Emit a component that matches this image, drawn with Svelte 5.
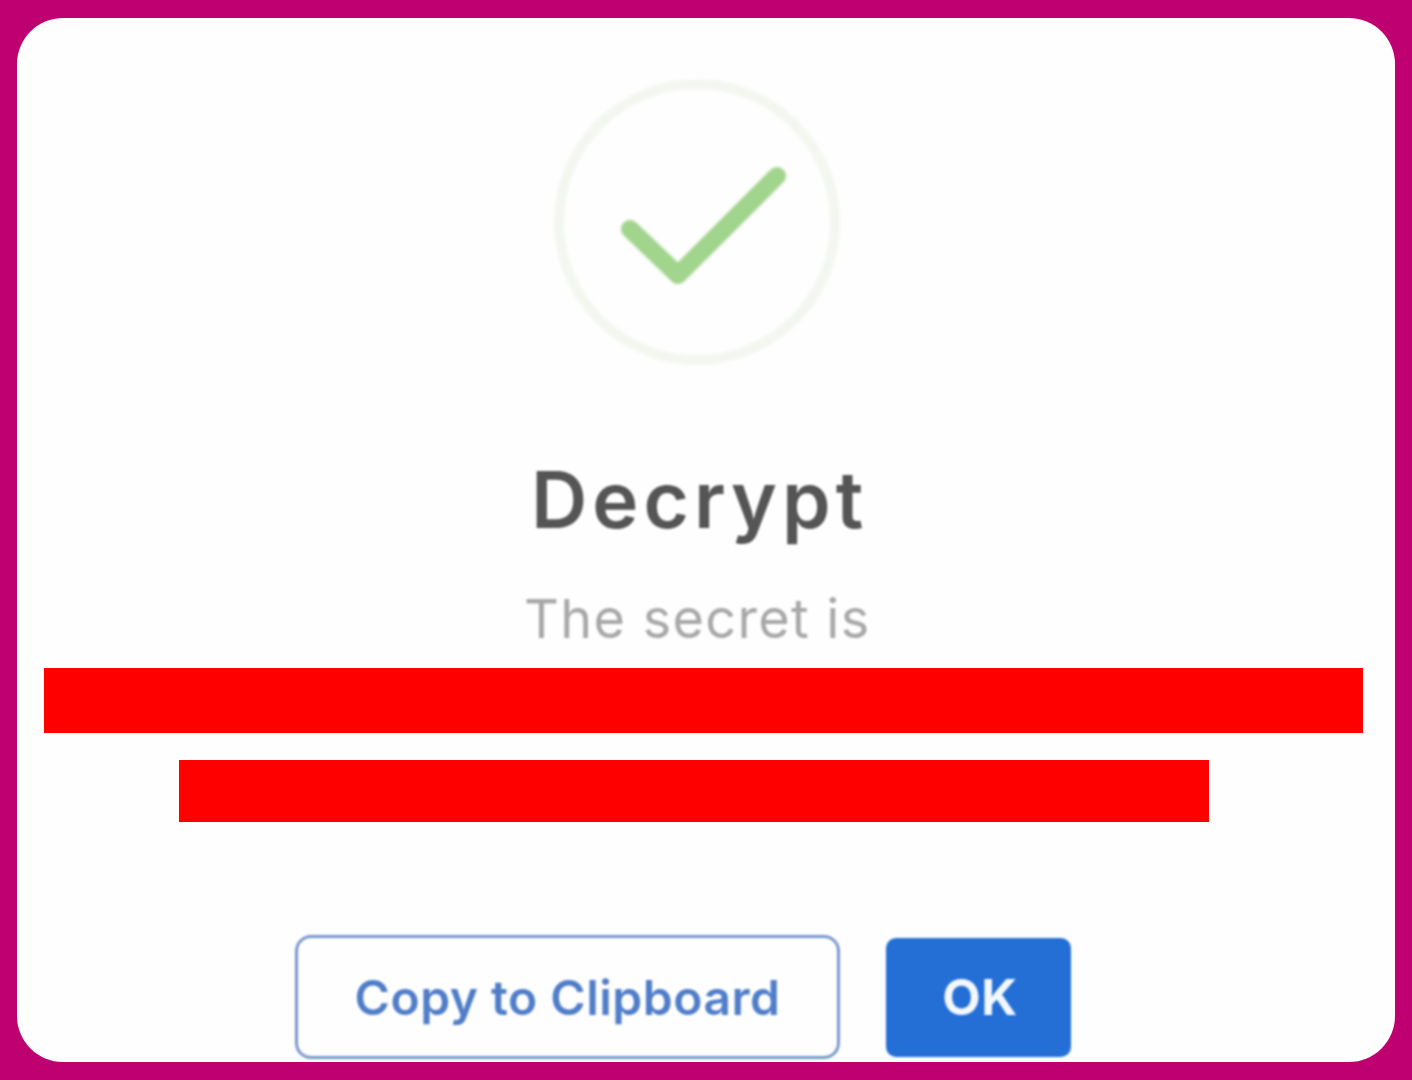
<script>
	let title = 'Decrypt';
	let message = 'The secret is';
</script>

<div class="page">
	<div class="card">
		<svg class="status" viewBox="0 0 290 290" width="290" height="290" aria-hidden="true">
			<circle cx="145" cy="145" r="138" fill="none" stroke="#f3f7f0" stroke-width="10" />
			<path d="M78 152 L126 198 L225 99" fill="none" stroke="#a1d48d" stroke-width="18" stroke-linecap="round" stroke-linejoin="round" />
		</svg>

		<h1>{title}</h1>
		<p>{message}</p>

		<div class="redacted first"></div>
		<div class="redacted second"></div>

		<div class="actions">
			<button class="secondary">Copy to Clipboard</button>
			<button class="primary">OK</button>
		</div>
	</div>
</div>

<style>
	:global(body) {
		margin: 0;
		background: #bf0071;
	}

	.page {
		box-sizing: border-box;
		height: 1080px;
		padding: 18px 17px;
	}

	.card {
		box-sizing: border-box;
		height: 1044px;
		background: #fefefe;
		border-radius: 46px;
		padding: 59px 0 0;
		display: flex;
		flex-direction: column;
		align-items: flex-start;
		font-family: Inter, "Liberation Sans", sans-serif;
		overflow: hidden;
	}

	.status {
		display: block;
		align-self: flex-start;
		margin-left: 535px;
		filter: blur(1.6px);
	}

	h1 {
		margin: 87px 0 0 514px;
		font-size: 78px;
		line-height: 92px;
		font-weight: 600;
		letter-spacing: 5px;
		color: #555;
		filter: blur(1px);
	}

	p {
		margin: 41px 0 0 507px;
		font-size: 54px;
		line-height: 64px;
		font-weight: 400;
		letter-spacing: 1.3px;
		color: #a8a8a8;
		filter: blur(1px);
	}

	.redacted {
		background: #fe0000;
	}

	.first {
		margin: 17px 0 0 27px;
		width: 1319px;
		height: 65px;
	}

	.second {
		margin: 27px 0 0 162px;
		width: 1030px;
		height: 62px;
	}

	.actions {
		margin: 113px 0 0 278px;
		display: flex;
		align-items: center;
		gap: 46px;
	}

	button {
		font-family: inherit;
		font-size: 48px;
		font-weight: 600;
		letter-spacing: 0.5px;
		box-sizing: border-box;
		padding: 0;
		cursor: pointer;
		filter: blur(0.8px);
	}

	.secondary {
		width: 545px;
		height: 124px;
		background: #fefefe;
		color: #4f7dc8;
		border: 3px solid #7a97cf;
		border-radius: 16px;
	}

	.primary {
		width: 185px;
		height: 119px;
		padding-left: 3px;
		background: #236fd6;
		color: #f4f8fd;
		border: none;
		border-radius: 10px;
		font-size: 50px;
		font-weight: 700;
	}
</style>
